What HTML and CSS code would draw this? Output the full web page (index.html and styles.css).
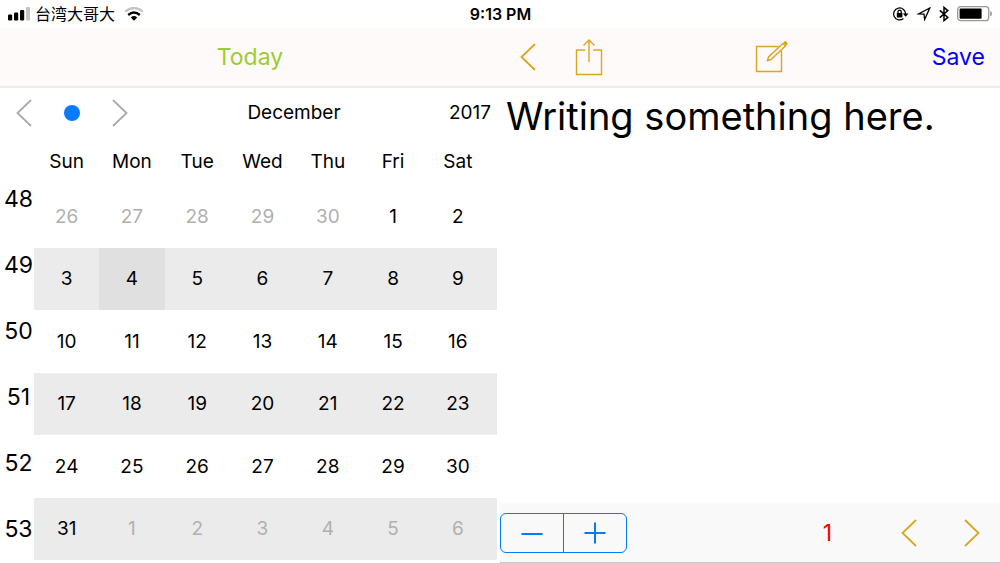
FILE: index.html
```html
<!DOCTYPE html>
<html lang="en">
<head>
  <meta charset="UTF-8" />
  <meta name="viewport" content="width=device-width, initial-scale=1" />
  <title>Diary</title>
  <link rel="stylesheet" href="styles.css">
</head>
<body>

  <header class="status-bar">
    <div class="status-left">
      <svg width="22" height="14" viewBox="0 0 22 14">
        <rect x="0" y="7.5" width="4.2" height="6" rx="1.2" />
        <rect x="6" y="5.5" width="4.2" height="8" rx="1.2" />
        <rect x="12" y="3" width="4.2" height="10.5" rx="1.2" />
        <rect x="18" y="0" width="4" height="13.5" rx="1.2" fill="#c4c4c4" />
      </svg>
      <span class="carrier" lang="zh">台湾大哥大</span>
      <svg class="wifi" width="20" height="14" viewBox="0 0 20 14" fill="none">
        <path d="M1.2 4.6Q10 -2.6 18.8 4.6" stroke="#c4c4c4" stroke-width="2.4" />
        <path d="M4.2 8Q10 3 15.8 8" stroke="#000" stroke-width="2.4" />
        <path d="M6.8 10.4Q10 7.8 13.2 10.4L10 13.8Z" fill="#000" />
      </svg>
    </div>
    <span class="time">9:13 PM</span>
    <div class="status-right">
      <svg width="17" height="16" viewBox="0 0 17 16" fill="none" stroke="#000" stroke-width="1.3">
        <path d="M13.6 8.2A6 6 0 1 0 11.4 12.6" />
        <path d="M10.8 7.4H16.6L13.7 10.8Z" fill="#000" stroke="none" />
        <rect x="4.8" y="7" width="5.6" height="4.4" rx="0.6" fill="#000" stroke="none" />
        <path d="M6 7V5.8A1.6 1.6 0 0 1 9.2 5.8V7" />
      </svg>
      <svg class="location" width="14" height="14" viewBox="0 0 14 14" fill="none" stroke="#000" stroke-width="1.3">
        <path d="M12.8 1L1.6 6.9L7 7.1L7.6 12.6Z" stroke-linejoin="miter" />
      </svg>
      <svg width="10" height="16" viewBox="0 0 10 16" fill="none" stroke="#000" stroke-width="1.5">
        <path d="M0.8 4.4L8.8 11.4L5 14.6V1.4L8.8 4.6L0.8 11.6" />
      </svg>
      <svg class="battery" width="36" height="16" viewBox="0 0 36 16">
        <rect x="0.7" y="0.7" width="31" height="14" rx="3" fill="#fff" stroke="#999" stroke-width="1.3" />
        <rect x="2.6" y="2.6" width="22" height="10.2" rx="1" />
        <path d="M33.2 5Q35 5.5 35 7.7Q35 10 33.2 10.4Z" fill="#999" />
      </svg>
    </div>
  </header>

  <nav class="toolbar">
    <div class="toolbar-side">
      <button type="button" class="today-btn">Today</button>
    </div>
    <div class="toolbar-main">
      <button type="button" class="icon-btn" aria-label="Back">
        <svg width="16" height="28" viewBox="0 0 16 28"><path d="M15 1L1.5 14L15 27" /></svg>
      </button>
      <button type="button" class="icon-btn share-btn" aria-label="Share">
        <svg width="28" height="38" viewBox="0 0 28 38">
          <path d="M10 12H1.5V36.5H26.5V12H18" />
          <path d="M14 24V2M8.5 7.5L14 2L19.5 7.5" />
        </svg>
      </button>
      <button type="button" class="icon-btn compose-btn" aria-label="New note">
        <svg width="34" height="34" viewBox="0 0 34 34">
          <path d="M23.5 6.5H1.5V31.5H26.5V11" />
          <path d="M12.5 20.5L13.5 17L28 3.5L30.5 6L16 19.5Z" />
          <path d="M14.5 18.5L27.5 6.3" stroke="#fffafa" stroke-width="0.8" />
          <path d="M30.2 2.8L31 3.6" stroke-width="3.2" stroke-linecap="round" />
        </svg>
      </button>
      <button type="button" class="save-btn">Save</button>
    </div>
  </nav>

  <main class="content">
    <section class="calendar">
      <div class="calendar-head">
        <div class="month-nav">
          <button type="button" class="nav-btn" aria-label="Previous month">
            <svg width="16" height="28" viewBox="0 0 16 28"><path d="M15 1L1.5 14L15 27" /></svg>
          </button>
          <button type="button" class="nav-btn" aria-label="Current month"><span class="dot"></span></button>
          <button type="button" class="nav-btn" aria-label="Next month">
            <svg width="16" height="28" viewBox="0 0 16 28"><path d="M1 1L14.5 14L1 27" /></svg>
          </button>
        </div>
        <span class="month">December</span>
        <span class="year">2017</span>
      </div>

      <div class="calendar-body">
        <ol class="weeks">
          <li>48</li>
          <li>49</li>
          <li>50</li>
          <li>51</li>
          <li>52</li>
          <li>53</li>
        </ol>
        <div class="days-wrap">
          <table class="days">
            <thead>
              <tr><th>Sun</th><th>Mon</th><th>Tue</th><th>Wed</th><th>Thu</th><th>Fri</th><th>Sat</th></tr>
            </thead>
            <tbody>
              <tr><td class="other">26</td><td class="other">27</td><td class="other">28</td><td class="other">29</td><td class="other">30</td><td>1</td><td>2</td></tr>
              <tr><td>3</td><td class="selected">4</td><td>5</td><td>6</td><td>7</td><td>8</td><td>9</td></tr>
              <tr><td>10</td><td>11</td><td>12</td><td>13</td><td>14</td><td>15</td><td>16</td></tr>
              <tr><td>17</td><td>18</td><td>19</td><td>20</td><td>21</td><td>22</td><td>23</td></tr>
              <tr><td>24</td><td>25</td><td>26</td><td>27</td><td>28</td><td>29</td><td>30</td></tr>
              <tr><td>31</td><td class="other">1</td><td class="other">2</td><td class="other">3</td><td class="other">4</td><td class="other">5</td><td class="other">6</td></tr>
            </tbody>
          </table>
        </div>
      </div>
    </section>

    <section class="editor">
      <textarea class="note" aria-label="Note" spellcheck="false">Writing something here.</textarea>
      <div class="editor-bar">
        <div class="stepper">
          <button type="button" aria-label="Decrease">
            <svg width="22" height="22" viewBox="0 0 22 22"><path d="M0.5 12H21.5" /></svg>
          </button>
          <button type="button" aria-label="Increase">
            <svg width="22" height="22" viewBox="0 0 22 22"><path d="M0.5 11H21.5M11 0.5V21.5" /></svg>
          </button>
        </div>
        <span class="page-number">1</span>
        <button type="button" class="icon-btn" aria-label="Previous page">
          <svg width="16" height="28" viewBox="0 0 16 28"><path d="M15 1L1.5 14L15 27" /></svg>
        </button>
        <button type="button" class="icon-btn next-btn" aria-label="Next page">
          <svg width="16" height="28" viewBox="0 0 16 28"><path d="M1 1L14.5 14L1 27" /></svg>
        </button>
      </div>
    </section>
  </main>

</body>
</html>
```
FILE: styles.css
```css
* {
  box-sizing: border-box;
}
body {
  margin: 0;
  min-height: 100vh;
  display: flex;
  flex-direction: column;
  font-family: Inter, "Noto Sans CJK SC", sans-serif;
  font-size: 19px;
  color: #000;
  background: #fff;
}
button {
  padding: 0;
  border: none;
  background: none;
  font-family: inherit;
  cursor: pointer;
}
svg {
  display: block;
}

/* status bar */
.status-bar {
  height: 28px;
  padding: 0 7px 0 8px;
  display: grid;
  grid-template-columns: 1fr auto 1fr;
  align-items: center;
}
.status-left,
.status-right {
  display: flex;
  align-items: center;
}
.carrier {
  margin: 0 9px 0 5px;
  font-size: 16px;
  line-height: 28px;
}
.time {
  font-size: 16px;
  font-weight: 600;
}
.status-right {
  justify-content: flex-end;
  gap: 8px;
}

/* toolbar */
.toolbar {
  height: 60px;
  display: grid;
  grid-template-columns: 1fr 1fr;
  background: #fffafa;
  border-bottom: 2px solid #f0eced;
}
.toolbar-side,
.toolbar-main {
  display: flex;
  align-items: center;
}
.toolbar-side {
  justify-content: center;
}
.toolbar-main {
  padding: 0 15px 0 20px;
}
.today-btn,
.save-btn {
  font-size: 23px;
}
.today-btn {
  color: #9acd32;
}
.save-btn {
  color: #0000ff;
}
.icon-btn svg {
  fill: none;
  stroke: #daa520;
  stroke-width: 1.8;
}
.share-btn {
  margin: 0 10px 0 39px;
}
.share-btn svg,
.compose-btn svg {
  stroke-width: 1.4;
}
.compose-btn {
  margin: 0 auto;
}

/* main area */
.content {
  flex: 1;
  display: grid;
  grid-template-columns: 1fr 1fr;
}
.calendar,
.editor {
  display: flex;
  flex-direction: column;
}

/* calendar */
.calendar-head {
  height: 49px;
  display: grid;
  grid-template-columns: 140px 1fr 52px;
  align-items: center;
}
.month-nav {
  display: flex;
  align-items: center;
  gap: 32px;
  padding-left: 16px;
}
.nav-btn svg {
  fill: none;
  stroke: #aaa;
  stroke-width: 1.8;
}
.dot {
  display: block;
  width: 16px;
  height: 16px;
  border-radius: 50%;
  background: #0a7aff;
}
.month {
  text-align: center;
}
.year {
  justify-self: end;
  padding-right: 9px;
}
.calendar-body {
  flex: 1;
  display: grid;
  grid-template-columns: 34px 1fr;
}
.weeks {
  list-style: none;
  margin: 0;
  padding: 29px 0 1px 3px;
  display: flex;
  flex-direction: column;
  font-size: 23px;
}
.weeks li {
  flex: 1;
  display: flex;
  align-items: center;
  justify-content: center;
}
.days-wrap {
  display: flex;
  padding: 0 3px 3px 0;
}
.days {
  width: 100%;
  table-layout: fixed;
  border-collapse: collapse;
}
.days th,
.days td {
  padding: 0;
  text-align: center;
}
.days th {
  width: 14.1%;
  height: 48px;
  font-weight: 400;
}
.days th:last-child {
  width: auto;
}
.days th:last-child,
.days td:last-child {
  padding-right: 7px;
}
.days tbody tr:nth-child(even) {
  background: #ebebeb;
}
.days .selected {
  background: #e0e0e0;
}
.days .other {
  color: #b0b0b0;
}

/* editor */
.note {
  flex: 1;
  width: 100%;
  padding: 4px 6px;
  border: none;
  outline: none;
  resize: none;
  background: #fff;
  color: #000;
  font-family: inherit;
  font-size: 38px;
  line-height: 48px;
}
.editor-bar {
  height: 60px;
  display: flex;
  align-items: center;
  padding-right: 20px;
  background: #f9f9f9;
  border-bottom: 1px solid #c8c8c8;
}
.stepper {
  display: flex;
  width: 127px;
  height: 40px;
  border: 1px solid #007aff;
  border-radius: 6px;
}
.stepper button {
  flex: 1;
  display: flex;
  align-items: center;
  justify-content: center;
}
.stepper button + button {
  border-left: 1px solid #007aff;
}
.stepper svg {
  stroke: #007aff;
  stroke-width: 2;
}
.page-number {
  margin: 0 69px 0 auto;
  font-size: 23px;
  color: #ff0000;
}
.next-btn {
  margin-left: 47px;
}
```
